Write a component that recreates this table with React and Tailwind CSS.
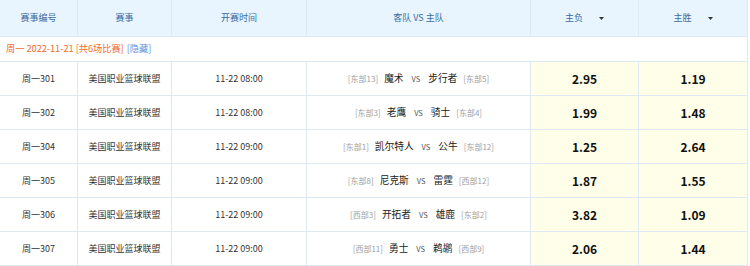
import React from "react";

const rows = [
  ["周一301", "11-22 08:00", "[东部13]", "魔术", "步行者", "[东部5]", "2.95", "1.19"],
  ["周一302", "11-22 08:00", "[东部3]", "老鹰", "骑士", "[东部4]", "1.99", "1.48"],
  ["周一304", "11-22 09:00", "[东部1]", "凯尔特人", "公牛", "[东部12]", "1.25", "2.64"],
  ["周一305", "11-22 09:00", "[东部8]", "尼克斯", "雷霆", "[西部12]", "1.87", "1.55"],
  ["周一306", "11-22 09:00", "[西部3]", "开拓者", "雄鹿", "[东部2]", "3.82", "1.09"],
  ["周一307", "11-22 09:00", "[西部11]", "勇士", "鹈鹕", "[西部9]", "2.06", "1.44"],
];

const font = { fontFamily: '"Noto Sans CJK SC", "Noto Sans", sans-serif' };

function Caret() {
  return (
    <svg width="5" height="3" viewBox="0 0 5 3" className="ml-[16px] inline-block">
      <path d="M0 0h5L2.5 3z" fill="#333" />
    </svg>
  );
}

export default function App() {
  const cell = "flex items-center justify-center border-r border-b border-[#dde9f3] whitespace-nowrap";
  return (
    <div className="w-[750px] h-[266px] overflow-hidden bg-white" style={font}>
      <div className="grid grid-cols-[78px_94px_135px_224px_108px_109px] w-[748px]">
        {["赛事编号", "赛事", "开赛时间", "客队 VS 主队"].map((h) => (
          <div key={h} className={`${cell} h-[37px] bg-[#e9f5fe] text-[9px] text-[#3b6aa0]`}>
            {h}
          </div>
        ))}
        <div className={`${cell} h-[37px] bg-[#e9f5fe] text-[9px] text-[#3b6aa0]`}>
          主负
          <Caret />
        </div>
        <div className={`${cell} h-[37px] bg-[#e9f5fe] text-[9px] text-[#3b6aa0]`}>
          主胜
          <Caret />
        </div>

        <div className="col-span-6 h-[25px] flex items-center pl-[6px] border-r border-b border-[#dde9f3] text-[9.2px]">
          <span className="text-[#f26b2a]">周一 2022-11-21 [共6场比赛]</span>
          <span className="ml-[3px] text-[#5b8fdb]">[隐藏]</span>
        </div>

        {rows.map((r) => (
          <React.Fragment key={r[0]}>
            <div className={`${cell} h-[34px] text-[9px] text-[#333]`}>{r[0]}</div>
            <div className={`${cell} h-[34px] text-[9px] text-[#333]`}>美国职业篮球联盟</div>
            <div className={`${cell} h-[34px] text-[9px] text-[#333]`}>{r[1]}</div>
            <div className={`${cell} h-[34px] text-[#222]`}>
              <span className="text-[8px] text-[#a0a0a0]">{r[2]}</span>
              <span className="ml-[6px] text-[9.7px]">{r[3]}</span>
              <span className="mx-[8px] text-[7.5px] text-[#555]">VS</span>
              <span className="text-[9.7px]">{r[4]}</span>
              <span className="ml-[6px] text-[8px] text-[#a0a0a0]">{r[5]}</span>
            </div>
            <div className={`${cell} h-[34px] bg-[#fefee9] text-[12px] font-bold text-[#111]`}>{r[6]}</div>
            <div className={`${cell} h-[34px] bg-[#fefee9] text-[12px] font-bold text-[#111]`}>{r[7]}</div>
          </React.Fragment>
        ))}
      </div>
    </div>
  );
}
